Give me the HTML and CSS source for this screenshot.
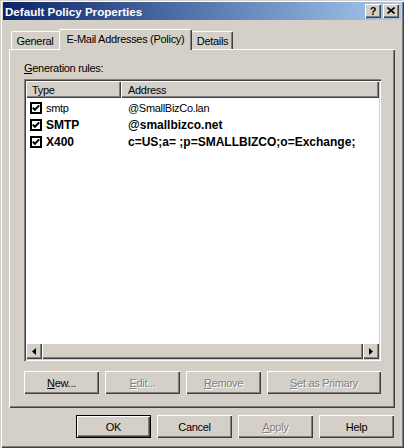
FILE: index.html
```html
<!DOCTYPE html>
<html>
<head>
<meta charset="utf-8">
<link rel="stylesheet" href="styles.css">
</head>
<body>
<div class="window">
  <div class="titlebar">
    <span class="title">Default Policy Properties</span>
    <div class="caption-btns">
      <span class="cbtn help">?</span>
      <span class="cbtn"><svg width="8" height="7" viewBox="0 0 8 7"><path d="M0.5 0.5 L7.5 6.5 M7.5 0.5 L0.5 6.5" stroke="#000" stroke-width="1.6" fill="none"/></svg></span>
    </div>
  </div>
  <div class="content">
    <div class="tabs">
      <div class="tab t-general">General</div>
      <div class="tab t-email active">E-Mail Addresses (Policy)</div>
      <div class="tab t-details">Details</div>
    </div>
    <div class="panel">
      <div class="label"><u>G</u>eneration rules:</div>
      <div class="list">
        <div class="header">
          <div class="hcell c1">Type</div>
          <div class="hcell c2">Address</div>
        </div>
        <div class="rows">
          <div class="row">
            <div class="cell c1"><svg class="chk" width="12" height="12" viewBox="0 0 12 12"><rect x="1" y="1" width="10" height="10" fill="#fff" stroke="#000" stroke-width="2"/><polyline points="2.8,5.6 4.9,7.8 9.2,3.4" fill="none" stroke="#000" stroke-width="2"/></svg><span>smtp</span></div>
            <div class="cell c2">@SmallBizCo.lan</div>
          </div>
          <div class="row bold">
            <div class="cell c1"><svg class="chk" width="12" height="12" viewBox="0 0 12 12"><rect x="1" y="1" width="10" height="10" fill="#fff" stroke="#000" stroke-width="2"/><polyline points="2.8,5.6 4.9,7.8 9.2,3.4" fill="none" stroke="#000" stroke-width="2"/></svg><span>SMTP</span></div>
            <div class="cell c2">@smallbizco.net</div>
          </div>
          <div class="row bold">
            <div class="cell c1"><svg class="chk" width="12" height="12" viewBox="0 0 12 12"><rect x="1" y="1" width="10" height="10" fill="#fff" stroke="#000" stroke-width="2"/><polyline points="2.8,5.6 4.9,7.8 9.2,3.4" fill="none" stroke="#000" stroke-width="2"/></svg><span>X400</span></div>
            <div class="cell c2">c=US;a= ;p=SMALLBIZCO;o=Exchange;</div>
          </div>
        </div>
        <div class="hscroll">
          <div class="sbtn"><svg width="4" height="7" viewBox="0 0 4 7"><polygon points="4,0 0,3.5 4,7" fill="#000"/></svg></div>
          <div class="thumb"></div>
          <div class="sbtn"><svg width="4" height="7" viewBox="0 0 4 7"><polygon points="0,0 4,3.5 0,7" fill="#000"/></svg></div>
        </div>
      </div>
      <div class="btnrow">
        <div class="btn"><span><u>N</u>ew...</span></div>
        <div class="btn dis"><span><u>E</u>dit...</span></div>
        <div class="btn dis"><span><u>R</u>emove</span></div>
        <div class="btn wide dis"><span><u>S</u>et as Primary</span></div>
      </div>
    </div>
    <div class="dlgbtns">
      <div class="btn default">OK</div>
      <div class="btn">Cancel</div>
      <div class="btn dis"><span><u>A</u>pply</span></div>
      <div class="btn">Help</div>
    </div>
  </div>
</div>
</body>
</html>
```

FILE: styles.css
```css
html, body {
  margin: 0;
  padding: 0;
}
body {
  width: 404px;
  height: 448px;
  overflow: hidden;
  font-family: "Liberation Sans", Arial, sans-serif;
  font-size: 11px;
  letter-spacing: -0.3px;
  color: #000;
  background: #d4d0c8;
}
.window {
  width: 404px;
  height: 448px;
  box-sizing: border-box;
  background: #d4d0c8;
  padding: 2px 3px 3px 3px;
  box-shadow: inset 1px 1px #d4d0c8, inset 2px 2px #fff, inset -1px -1px #404040, inset -2px -2px #808080;
  display: flex;
  flex-direction: column;
}
.titlebar {
  height: 18px;
  flex: none;
  background: linear-gradient(to right, #0a246a, #a6caf0);
  display: flex;
  align-items: center;
  padding: 0 2px 0 2px;
  color: #fff;
  font-weight: bold;
  font-size: 11.6px;
  letter-spacing: 0;
}
.title {
  flex: 1;
}
.caption-btns {
  display: flex;
  gap: 2px;
}
.cbtn {
  width: 16px;
  height: 14px;
  box-sizing: border-box;
  background: #d4d0c8;
  box-shadow: inset 1px 1px #fff, inset -1px -1px #404040, inset -2px -2px #808080;
  display: flex;
  align-items: center;
  justify-content: center;
  color: #000;
  font-size: 11px;
  font-weight: bold;
  padding-bottom: 1px;
}
.content {
  padding: 0 6px;
  display: flex;
  flex-direction: column;
}
.tabs {
  display: flex;
  align-items: flex-end;
  height: 20px;
  margin-top: 9px;
  padding-left: 2px;
  position: relative;
  z-index: 1;
}
.tab {
  height: 18px;
  box-sizing: border-box;
  border-top: 1px solid #fff;
  border-left: 1px solid #fff;
  border-right: 1px solid #404040;
  box-shadow: inset -1px 0 #808080;
  border-radius: 2px 2px 0 0;
  background: #d4d0c8;
  display: flex;
  align-items: center;
  justify-content: center;
  white-space: nowrap;
}
.t-general { width: 50px; padding-right: 2px; }
.t-email { width: 133px; }
.t-details { width: 43px; padding-left: 2px; }
.tab.active {
  height: 21px;
  margin: 0 -2px -1px -2px;
  padding-bottom: 3px;
  position: relative;
  z-index: 2;
}
.panel {
  height: 359px;
  box-sizing: border-box;
  background: #d4d0c8;
  box-shadow: inset 1px 1px #fff, inset -1px -1px #404040, inset -2px -2px #808080;
  padding: 13px 14px 14px 15px;
  display: flex;
  flex-direction: column;
}
.label {
  height: 13px;
  line-height: 13px;
  margin-bottom: 4px;
}
.list {
  height: 282px;
  box-sizing: border-box;
  background: #fff;
  box-shadow: inset 1px 1px #808080, inset 2px 2px #404040, inset -1px -1px #fff, inset -2px -2px #d4d0c8;
  padding: 2px;
  display: flex;
  flex-direction: column;
}
.header {
  display: flex;
  height: 17px;
  flex: none;
}
.hcell {
  box-sizing: border-box;
  background: #d4d0c8;
  box-shadow: inset 1px 1px #fff, inset -1px -1px #404040, inset -2px -2px #808080;
  padding-left: 6px;
  display: flex;
  align-items: center;
}
.hcell.c1 { width: 95px; flex: none; }
.hcell.c2 { flex: 1; padding-left: 7px; }
.rows {
  flex: 1;
  padding-top: 1px;
}
.row {
  display: flex;
  height: 17px;
  align-items: center;
  white-space: nowrap;
}
.row.bold {
  font-weight: bold;
  font-size: 12px;
  letter-spacing: 0;
}
.cell.c1 {
  width: 95px;
  flex: none;
  box-sizing: border-box;
  padding-left: 4px;
  display: flex;
  align-items: center;
  gap: 4px;
}
.cell.c2 {
  padding-left: 7px;
}
.chk {
  flex: none;
  display: block;
}
.hscroll {
  display: flex;
  height: 16px;
  flex: none;
}
.sbtn {
  width: 16px;
  height: 16px;
  box-sizing: border-box;
  background: #d4d0c8;
  box-shadow: inset 1px 1px #fff, inset -1px -1px #404040, inset -2px -2px #808080;
  display: flex;
  align-items: center;
  justify-content: center;
}
.sbtn svg { display: block; }
.thumb {
  flex: 1;
  background: #d4d0c8;
  box-shadow: inset 1px 1px #fff, inset -1px -1px #404040, inset -2px -2px #808080;
}
.btnrow {
  display: flex;
  gap: 6px;
  margin-top: 10px;
}
.btn {
  width: 75px;
  height: 23px;
  box-sizing: border-box;
  background: #d4d0c8;
  box-shadow: inset 1px 1px #fff, inset -1px -1px #404040, inset -2px -2px #808080;
  display: flex;
  align-items: center;
  justify-content: center;
  white-space: nowrap;
}
.btn.wide { width: 114px; }
.btn.dis {
  color: #808080;
  text-shadow: 1px 1px 0 #fff;
}
.btn.default {
  box-shadow: inset 0 0 0 1px #000, inset 2px 2px #fff, inset -2px -2px #404040, inset -3px -3px #808080;
}
.dlgbtns {
  display: flex;
  justify-content: flex-end;
  gap: 6px;
  margin-top: 7px;
  padding-right: 1px;
}
```
